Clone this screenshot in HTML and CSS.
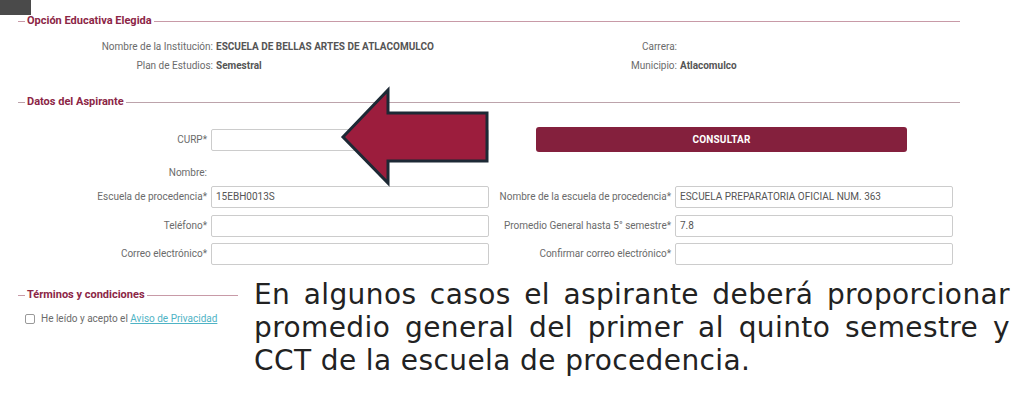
FILE: index.html
```html
<!DOCTYPE html>
<html lang="es">
<head>
<meta charset="utf-8">
<title>Registro</title>
<link rel="stylesheet" href="styles.css">
</head>
<body>
<div class="corner"></div>

<section class="block block-info">
  <div class="legend"><span class="legend-text">Opción Educativa Elegida</span></div>
  <div class="info-grid">
    <div class="lbl">Nombre de la Institución:</div>
    <div class="val">ESCUELA DE BELLAS ARTES DE ATLACOMULCO</div>
    <div class="lbl">Carrera:</div>
    <div class="val"></div>
    <div class="lbl">Plan de Estudios:</div>
    <div class="val">Semestral</div>
    <div class="lbl">Municipio:</div>
    <div class="val">Atlacomulco</div>
  </div>
</section>

<section class="block block-data">
  <div class="legend"><span class="legend-text">Datos del Aspirante</span></div>
  <div class="form-grid">
    <label class="flbl">CURP*</label>
    <div class="field"></div>
    <div class="btn-cell"><button class="btn">CONSULTAR</button></div>

    <div class="flbl nombre">Nombre:</div>
    <div class="spacer"></div>

    <label class="flbl">Escuela de procedencia*</label>
    <div class="field">15EBH0013S</div>
    <label class="flbl">Nombre de la escuela de procedencia*</label>
    <div class="field">ESCUELA PREPARATORIA OFICIAL NUM. 363</div>

    <label class="flbl">Teléfono*</label>
    <div class="field"></div>
    <label class="flbl">Promedio General hasta 5° semestre*</label>
    <div class="field">7.8</div>

    <label class="flbl">Correo electrónico*</label>
    <div class="field"></div>
    <label class="flbl">Confirmar correo electrónico*</label>
    <div class="field"></div>
  </div>
</section>

<div class="bottom">
  <section class="terms">
    <div class="legend"><span class="legend-text">Términos y condiciones</span></div>
    <div class="check-row">
      <span class="checkbox"></span>
      <span>He leído y acepto el <a class="link" href="#">Aviso de Privacidad</a></span>
    </div>
  </section>
  <p class="note">En algunos casos el aspirante deberá proporcionar promedio general del primer al quinto semestre y CCT de la escuela de procedencia.</p>
</div>

<svg class="arrow" width="155" height="102" viewBox="0 0 155 102" aria-hidden="true">
  <polygon points="5,52 50,5 50,28 149,28 149,76 50,76 50,98" fill="#9c1d3d" stroke="#1d2935" stroke-width="3" stroke-linejoin="miter"/>
</svg>
</body>
</html>
```

FILE: styles.css
```css
html, body {
  margin: 0;
  padding: 0;
  background: #ffffff;
}

body {
  position: relative;
  width: 1024px;
  height: 395px;
  overflow: hidden;
  font-family: Roboto, "Liberation Sans", Arial, sans-serif;
  font-size: 10px;
  color: #666666;
}

.corner {
  position: absolute;
  left: 0;
  top: 0;
  width: 31px;
  height: 15px;
  background: #4a4a4a;
}

.block {
  margin: 0 64px 0 18px;
}

.legend {
  display: flex;
  align-items: center;
  height: 14px;
}

.legend::before {
  content: "";
  width: 7px;
  height: 1px;
  background: #c89aa7;
}

.legend::after {
  content: "";
  flex: 1;
  height: 1px;
  background: #c89aa7;
}

.block-data .legend::before,
.block-data .legend::after {
  background: #bca3ab;
}

.legend-text {
  padding: 0 2px;
  font-size: 11px;
  font-weight: 700;
  color: #8c2646;
  line-height: 14px;
}

.block-info {
  padding-top: 14px;
}

.info-grid {
  display: grid;
  grid-template-columns: 198px 250px 214px 1fr;
  row-gap: 7px;
  margin-top: 13px;
  line-height: 12px;
}

.lbl {
  text-align: right;
  padding-right: 3px;
  color: #6b6b6b;
}

.val {
  font-weight: 700;
  color: #555555;
}

.block-data {
  margin-top: 23px;
}

.form-grid {
  display: grid;
  grid-template-columns: 193px 278px 186px 278px;
  row-gap: 6.5px;
  margin-top: 18px;
  align-items: center;
}

.flbl {
  text-align: right;
  padding-right: 4px;
  color: #6b6b6b;
  line-height: 12px;
}

.field {
  height: 22px;
  box-sizing: border-box;
  border: 1px solid #cccccc;
  border-radius: 2px;
  padding: 0 4px;
  line-height: 20px;
  color: #555555;
  background: #ffffff;
}

.btn-cell {
  grid-column: 3 / 5;
  padding-left: 47px;
}

.btn {
  display: block;
  width: 371px;
  height: 25px;
  border: none;
  border-radius: 3px;
  background: #84203d;
  color: #ffffff;
  font-family: Roboto, "Liberation Sans", Arial, sans-serif;
  font-size: 10px;
  font-weight: 700;
  letter-spacing: 0.2px;
}

.nombre {
  margin: 8px 0 1px;
}

.spacer {
  grid-column: 2 / 5;
}

.bottom {
  display: flex;
  margin-top: 13px;
  margin-left: 18px;
}

.terms {
  width: 220px;
  padding-top: 10px;
}

.check-row {
  display: flex;
  align-items: center;
  gap: 6px;
  margin-top: 11px;
  padding-left: 7px;
  color: #6b6b6b;
}

.checkbox {
  width: 8px;
  height: 8px;
  border: 1px solid #999999;
  border-radius: 2px;
  background: #ffffff;
}

.link {
  color: #4fb3c5;
  text-decoration: underline;
}

.note {
  width: 756px;
  margin: 0 0 0 16px;
  font-family: "DejaVu Sans", sans-serif;
  font-size: 28px;
  line-height: 33px;
  letter-spacing: 0.4px;
  color: #222222;
  text-align: justify;
}

.arrow {
  position: absolute;
  left: 338px;
  top: 85px;
}
```
